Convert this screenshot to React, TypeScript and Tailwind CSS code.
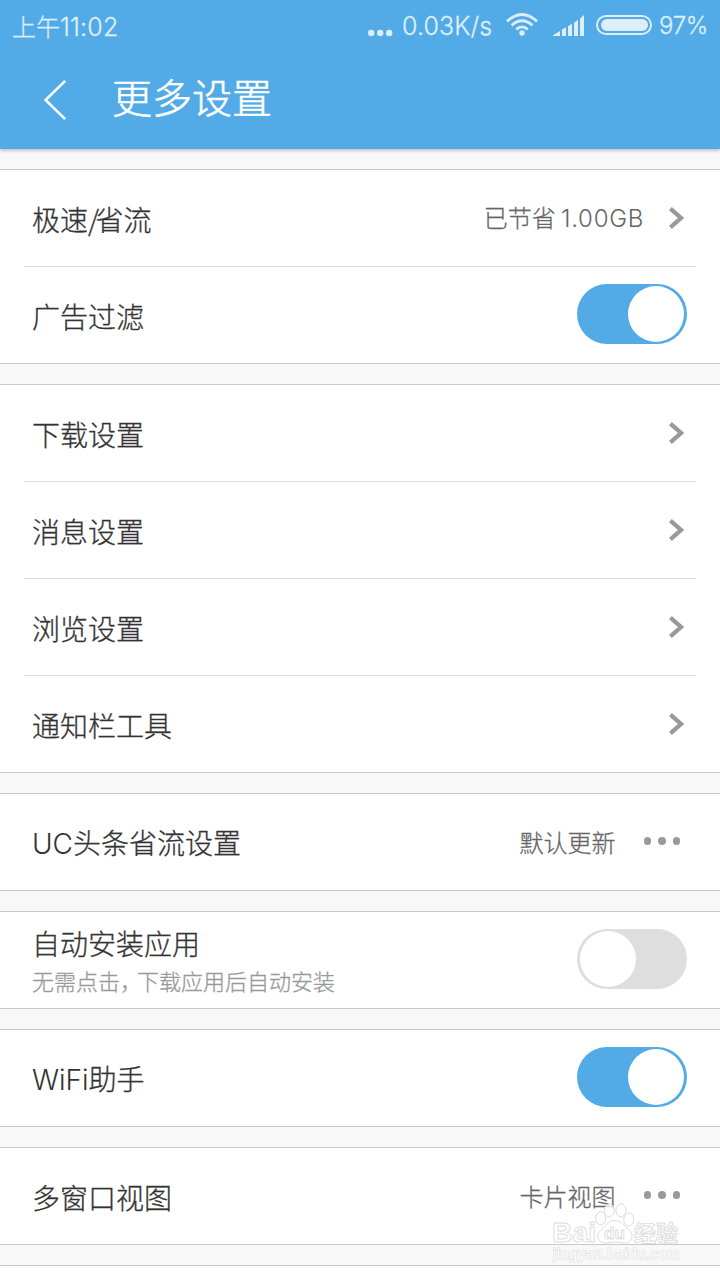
import type { ReactNode } from "react";

const latin = "font-['Inter','Noto_Sans_CJK_SC',sans-serif] [-webkit-text-stroke:0px]";

function Chevron() {
  return (
    <svg className="ml-6 mr-[3px] h-6 w-4 shrink-0 translate-y-px" viewBox="0 0 16 24" fill="none">
      <path d="M2.4 2.6 L13 12 L2.4 21.4" stroke="#999" strokeWidth="4.2" />
    </svg>
  );
}

function Dots() {
  return (
    <div className="ml-7 mr-[7px] flex gap-[7px]">
      <i className="size-[7.5px] rounded-full bg-[#999]" />
      <i className="size-[7.5px] rounded-full bg-[#999]" />
      <i className="size-[7.5px] rounded-full bg-[#999]" />
    </div>
  );
}

function Toggle({ on }: { on?: boolean }) {
  return (
    <div
      className={
        on
          ? "flex h-[60px] w-[110px] items-center justify-end rounded-full bg-[#52abe6] px-[3px]"
          : "flex h-[60px] w-[110px] items-center justify-start rounded-full bg-[#dedede] px-[3px]"
      }
    >
      <i className="size-14 rounded-full bg-white" />
    </div>
  );
}

function Row({ label, note, value, children }: { label: ReactNode; note?: ReactNode; value?: ReactNode; children: ReactNode }) {
  return (
    <div className="box-content flex h-24 items-center justify-between pr-[9px] pl-2">
      {note ? (
        <div className="flex flex-col whitespace-nowrap">
          <span className="text-[28px] leading-10 text-[#333]">{label}</span>
          <span className="-mt-px text-[22px] leading-9 text-[#999]">{note}</span>
        </div>
      ) : (
        <span className="pt-0.5 text-[28px] leading-10 whitespace-nowrap text-[#333]">{label}</span>
      )}
      <div className="flex items-center pb-0.5">
        {value && <span className="pt-0.5 text-[24px] leading-9 whitespace-nowrap text-[#666]">{value}</span>}
        {children}
      </div>
    </div>
  );
}

function Section({ children }: { children: ReactNode }) {
  return (
    <section className="border-y border-[#c8c8c8] bg-white px-6">
      <div className="divide-y divide-[#d9d9d9]">{children}</div>
    </section>
  );
}

function StatusBar() {
  return (
    <div className="flex h-[52px] items-center justify-between pr-3 pl-3 text-[#dceefa]">
      <span className="text-[24px] leading-8 whitespace-nowrap">
        上午<span className="font-['Inter',sans-serif] text-[25px] tracking-[0.2px]">11:02</span>
      </span>
      <div className="flex items-center">
        <svg className="h-10 w-[26px]" viewBox="0 0 26 40" fill="currentColor">
          <circle cx="3.2" cy="27" r="3.2" />
          <circle cx="12.2" cy="27" r="3.2" />
          <circle cx="21.2" cy="27" r="3.2" />
        </svg>
        <span className="ml-2 w-[91px] font-['Inter',sans-serif] text-[25px] leading-8 tracking-[0.1px] whitespace-nowrap">0.03K/s</span>
        <svg className="ml-[13px] h-10 w-8" viewBox="0 0 32 40" fill="none" stroke="currentColor" strokeWidth="2.8">
          <path d="M1 15.4 Q16 1.6 31 15.4" />
          <path d="M5.6 19.4 Q16 10.2 26.4 19.4" />
          <path d="M10.3 23.4 Q16 18.4 21.7 23.4" />
          <circle cx="16" cy="27" r="2.7" fill="currentColor" stroke="none" />
        </svg>
        <svg className="ml-[15px] h-10 w-8" viewBox="0 0 32 40" fill="currentColor">
          <path d="M0 30 V29.2 L7 25 V30 Z M9 30 V23.4 L13 21.2 V30 Z M15 30 V20.2 L19 17.8 V30 Z M21 30 V16.8 L25 13.8 V30 Z M27 30 V12.4 L31 9 V30 Z" />
        </svg>
        <div className="mb-0.5 ml-[11px] h-5 w-14 rounded-full border-2 border-[#dceefa] p-[2px]">
          <div className="ml-px h-3 w-[47px] rounded-full bg-[#dceefa]" />
        </div>
        <span className="ml-[7px] w-[49px] font-['Inter',sans-serif] text-[24px] leading-8 tracking-[-0.3px] whitespace-nowrap">97%</span>
      </div>
    </div>
  );
}

function Watermark() {
  return (
    <svg
      className="absolute top-[1200px] left-[548px] h-[68px] w-[136px] [-webkit-text-stroke:0px]"
      viewBox="0 0 136 68"
      fill="#fff"
      fillOpacity="0.8"
      stroke="#dcdcdc"
      strokeWidth="1"
    >
      <ellipse cx="52.7" cy="18.3" rx="5" ry="6.5" />
      <ellipse cx="61.3" cy="10.5" rx="5" ry="6.5" />
      <ellipse cx="72.9" cy="10.3" rx="5" ry="6.5" />
      <ellipse cx="80.7" cy="19.5" rx="5" ry="6.5" />
      <path d="M67 20.5 C60 20.5 58 26 53 30 C47 35 50 43.5 58 43 Q67 41 76 43 C84 43.5 87 35 81 30 C76 26 74 20.5 67 20.5 Z" />
      <g strokeWidth="0.9" fillOpacity="1">
        <text x="4" y="42" fontSize="28" fontFamily="Liberation Sans, sans-serif" fontWeight="700" textLength="44" lengthAdjust="spacingAndGlyphs">Bai</text>
        <text x="56" y="39" fontSize="17" fontFamily="Liberation Sans, sans-serif" fontWeight="700">du</text>
        <text x="86" y="41" fontSize="22" fontFamily="Noto Sans CJK SC, sans-serif" fontWeight="700">经验</text>
        <text x="5" y="59" fontSize="15" fontFamily="Liberation Sans, sans-serif" textLength="126" paintOrder="stroke" strokeWidth="1.2">jingyan.baidu.com</text>
      </g>
    </svg>
  );
}

export default function App() {
  return (
    <div className="relative h-[1280px] w-[720px] overflow-hidden bg-[#f8f8f8] font-['Noto_Sans_CJK_SC',sans-serif] font-light [-webkit-text-stroke:0.3px]">
      <header className="h-[149px] bg-[#52abe6] text-white shadow-[0_1px_4px_rgba(0,0,0,0.3)]">
        <StatusBar />
        <div className="flex h-[95px] items-center pl-[43px]">
          <svg className="h-10 w-6" viewBox="0 0 24 40" fill="none" stroke="white" strokeWidth="2.6">
            <path d="M22.2 0.9 L2.6 20 L22.2 39.1" />
          </svg>
          <h1 className="ml-[45px] pb-2 text-[40px] leading-[60px] [-webkit-text-stroke:0.6px]">更多设置</h1>
        </div>
      </header>
      <main className="flex flex-col gap-5 pt-5">
        <Section>
          <Row
            label={<>极速<span className="tracking-[-3.5px]">/</span>省流</>}
            value={<>已节省 <span className={`${latin} tracking-[0.7px]`}>1.00GB</span></>}
          >
            <Chevron />
          </Row>
          <Row label="广告过滤"><Toggle on /></Row>
        </Section>
        <Section>
          <Row label="下载设置"><Chevron /></Row>
          <Row label="消息设置"><Chevron /></Row>
          <Row label="浏览设置"><Chevron /></Row>
          <Row label="通知栏工具"><Chevron /></Row>
        </Section>
        <Section>
          <Row label={<><span className={latin}>UC</span>头条省流设置</>} value="默认更新"><Dots /></Row>
        </Section>
        <Section>
          <Row label="自动安装应用" note={<>无需点击<span className="tracking-[-5px]">，</span>下载应用后自动安装</>}><Toggle /></Row>
        </Section>
        <Section>
          <Row label={<><span className={latin}>WiFi</span>助手</>}><Toggle on /></Row>
        </Section>
        <Section>
          <Row label="多窗口视图" value="卡片视图"><Dots /></Row>
        </Section>
        <div className="h-4 shrink-0 border-t border-[#c8c8c8] bg-white" />
      </main>
      <Watermark />
    </div>
  );
}
